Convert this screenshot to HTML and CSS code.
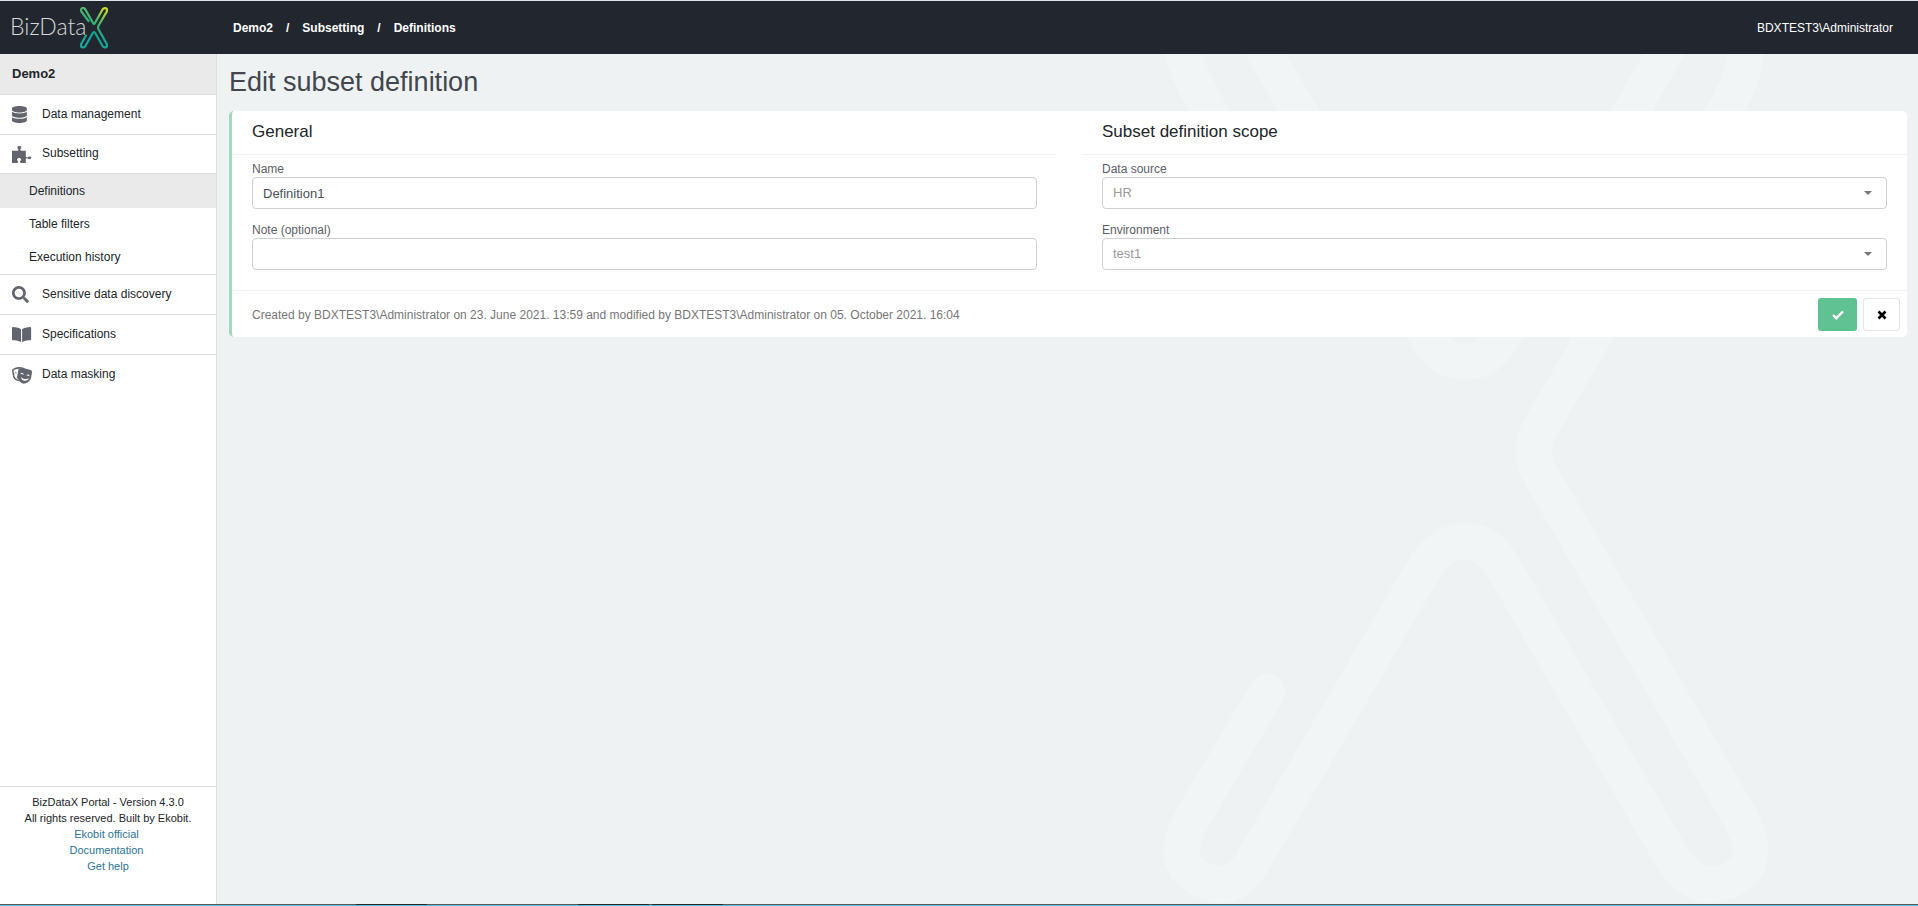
FILE: index.html
```html
<!DOCTYPE html>
<html lang="en">
<head>
<meta charset="utf-8">
<title>BizDataX Portal</title>
<link rel="stylesheet" href="styles.css">
</head>
<body>
<header class="topbar">
  <a class="logo" href="#" aria-label="BizDataX">
    <span class="logo-text">BizData</span>
    <svg class="logo-x" viewBox="0 0 28 42" aria-hidden="true">
      <defs>
        <linearGradient id="lx" x1="0.8" y1="0" x2="0.3" y2="1">
          <stop offset="0" stop-color="#c8d92b"/>
          <stop offset="0.3" stop-color="#4fb96c"/>
          <stop offset="0.65" stop-color="#12a594"/>
          <stop offset="1" stop-color="#16a99a"/>
        </linearGradient>
      </defs>
      <path d="M8.500 14L1.300 4.500Q.4 1.500 2.600 1Q4.300.7 5.400 2.600L13 16Q14 18 15 16L22.500 2.500Q24 .6 26 1.300Q27.700 2.300 26.800 4.500L18.600 18.500Q17.500 20.500 18.600 22.500L26.800 37Q27.700 39.500 25.800 40.300Q23.800 41 22.600 39L15.200 26Q14 24 12.800 26L5.400 39Q4.200 41 2.200 40.300Q.3 39.400 1.200 37L6 28.500" fill="none" stroke="url(#lx)" stroke-width="2.200" stroke-linecap="round"/>
    </svg>
  </a>
  <nav class="crumbs" aria-label="Breadcrumb">
    <a href="#">Demo2</a><span>/</span><a href="#">Subsetting</a><span>/</span><a href="#">Definitions</a>
  </nav>
  <span class="user">BDXTEST3\Administrator</span>
</header>
<div class="shell">
  <aside class="sidebar">
    <a class="project" href="#">Demo2</a>
    <nav class="menu" aria-label="Main">
      <a class="item" href="#"><svg class="ico" viewBox="0 0 448 512" preserveAspectRatio="xMinYMid"><path d="M448 73v46c0 40-100 73-224 73S0 159 0 119V73C0 33 100 0 224 0s224 33 224 73zm0 103v103c0 40-100 73-224 73S0 319 0 279V176c48 33 136 48 224 48s176-15 224-48zm0 160v103c0 40-100 73-224 73S0 479 0 439V336c48 33 136 48 224 48s176-15 224-48z"/></svg>Data management</a>
      <a class="item open" href="#"><svg class="ico" viewBox="0 0 576 512" preserveAspectRatio="xMinYMid"><path d="M519 313c-30 0-36 31-68 31-36 0-35-40-35-40V144H288s-40-1-40-35c0-32 31-38 31-69 0-26-24-40-55-40s-60 15-60 42c0 29 26 43 26 68 0 34-44 34-44 34H0v368h143c37 0 41-18 41-36 0-30-33-34-33-66 0-34 28-50 61-50 34 0 62 15 62 50 0 31-33 37-33 66 0 16 6 36 39 36h136V404s1-36 35-36c32 0 38 31 68 31 38 0 57-13 57-44 0-28-19-42-57-42z"/></svg>Subsetting</a>
      <div class="sub">
        <a class="subitem current" href="#">Definitions</a>
        <a class="subitem" href="#">Table filters</a>
        <a class="subitem" href="#">Execution history</a>
      </div>
      <a class="item" href="#"><svg class="ico" viewBox="0 0 512 512" preserveAspectRatio="xMinYMid"><path d="M505 443L405 343c-4-5-11-7-17-7h-16a208 208 0 1 0-36 36v16c0 6 3 13 7 17l100 100c9 9 24 9 34 0l28-28c9-10 9-25 0-34zM208 336a128 128 0 1 1 0-256 128 128 0 0 1 0 256z"/></svg>Sensitive data discovery</a>
      <a class="item" href="#"><svg class="ico" viewBox="0 0 576 512" preserveAspectRatio="xMinYMid"><path d="M542 32c-55 3-164 15-231 56-5 3-7 8-7 13v364c0 11 12 18 23 13 69-35 169-45 218-47 17-1 31-15 31-31V64c0-18-16-33-34-32zM265 88C198 47 89 35 34 32 16 31 0 46 0 64v336c0 16 14 30 31 31 49 2 149 12 218 47 11 5 23-2 23-13V101c0-5-2-10-7-13z"/></svg>Specifications</a>
      <a class="item last" href="#"><svg class="ico" viewBox="0 0 640 512" preserveAspectRatio="xMinYMid"><path fill-rule="evenodd" d="M207 245c-36 6-61 33-63 65 14-12 34-21 53-24l10-1V245zM147 187c-3-17-22-29-42-25-20 3-34 20-31 37 7-5 16-9 31-12 18-3 30-3 42 0zM206 336l-3-47c-25 4-47 19-62 39 15 9 41 17 66 20zM48 96c33-18 96-46 176-46 70 0 130 19 165 34l53 9c-11-17-21-28-35-36C365 33 300 0 210 3 120 5 58 42 19 68 5 77-1 94 1 111l28 175c11 70 128 151 206 139-10-12-18-22-23-34C165 385 81 315 73 268L48 108zM259 155c-17-10-35-8-42 6 0 20-5 26-5 26-3 15-1 24 3 30z"/><path fill-rule="evenodd" d="M606 120c-36-19-97-48-184-64s-156-7-196-1c-18 4-31 15-34 31l-30 175c-17 96 91 225 170 239s225-71 241-167l31-176c3-15-4-30-18-37zM252 220c5-27 32-44 58-39s44 31 39 58c-7-10-24-19-45-23s-39-3-52 4zm114 196c-57-10-97-60-95-116 28 27 67 50 114 58s90 0 126-16c-20 53-75 84-145 74zm159-133c-9-9-23-18-45-22s-38-1-51 6c5-27 31-45 58-40s43 30 38 56z"/></svg>Data masking</a>
    </nav>
    <footer class="about">
      <span>BizDataX Portal - Version 4.3.0</span>
      <span>All rights reserved. Built by Ekobit.</span>
      <a href="#">Ekobit official&nbsp;</a>
      <a href="#">Documentation&nbsp;</a>
      <a href="#">Get help</a>
    </footer>
  </aside>
  <main class="content">
    <svg class="watermark" viewBox="1140 54 778 850" aria-hidden="true">
      <path d="M1181 40Q1183 65 1206 105L1320 310M1258 40L1428 338Q1442 362 1465 362T1502 338L1672 40M1747 40Q1747 72 1728 105L1542 425Q1526 451 1542 477L1738 814C1770 868 1732 885 1708 885Q1686 882 1670 854L1502 565Q1487 541 1465 541T1426 565L1257 854C1250 868 1239 885 1220 885Q1164 875 1190 822L1267 692"/>
    </svg>
    <h1>Edit subset definition</h1>
    <form class="card">
      <div class="columns">
        <section class="column">
          <h2>General</h2>
          <div class="fields">
            <label for="name">Name</label>
            <input id="name" type="text" value="Definition1">
            <label for="note">Note (optional)</label>
            <input id="note" type="text">
          </div>
        </section>
        <section class="column">
          <h2>Subset definition scope</h2>
          <div class="fields">
            <label for="source">Data source</label>
            <span class="pick"><select id="source" disabled><option>HR</option></select></span>
            <label for="env">Environment</label>
            <span class="pick"><select id="env" disabled><option>test1</option></select></span>
          </div>
        </section>
      </div>
      <div class="actions">
        <p>Created by BDXTEST3\Administrator on 23. June 2021. 13:59 and modified by BDXTEST3\Administrator on 05. October 2021. 16:04</p>
        <button class="save" type="submit" aria-label="Save"><svg viewBox="0 0 12 12"><path d="M1 6L4.300 9.200L11 2.500" fill="none" stroke="#fff" stroke-width="2.400"/></svg></button>
        <button class="cancel" type="button" aria-label="Cancel"><svg viewBox="0 0 12 12"><path d="M2.500 2.500L9.500 9.500M9.500 2.500L2.500 9.500" fill="none" stroke="#000" stroke-width="2.600"/></svg></button>
      </div>
    </form>
  </main>
</div>
<div class="taskbar"><i></i><i class="apart"></i><i></i></div>
</body>
</html>
```

FILE: styles.css
```css
* { box-sizing: border-box; }
body {
  margin: 0;
  min-height: 100vh;
  display: flex;
  flex-direction: column;
  font-family: "Liberation Sans", Arial, sans-serif;
  font-size: 12px;
  color: #212529;
  background: #eef2f3;
}
a { color: inherit; text-decoration: none; }

.topbar {
  display: flex;
  align-items: center;
  height: 54px;
  padding-right: 25px;
  border-top: 1px solid #dfe5e8;
  background: #22272f;
  color: #fff;
}
.logo {
  display: flex;
  align-items: center;
  width: 233px;
  padding-left: 10px;
}
.logo-text {
  padding-bottom: 3px;
  font-family: Lato, sans-serif;
  font-weight: 300;
  font-size: 23px;
  color: #d5d8da;
}
.logo-x { width: 28px; height: 42px; margin-left: -6px; }
.crumbs { display: flex; flex: 1; gap: 13px; font-weight: bold; }

.shell { display: flex; flex: 1; }
.sidebar {
  display: flex;
  flex-direction: column;
  flex: 0 0 217px;
  border-right: 1px solid #dcdfe1;
  background: #fff;
}
.project {
  height: 41px;
  padding: 0 12px;
  line-height: 39px;
  font-size: 13px;
  font-weight: bold;
  background: #eaeaea;
  border-bottom: 1px solid #dcdcdc;
}
.menu { flex: 1; }
.item {
  display: flex;
  align-items: center;
  height: 40px;
  padding: 0 0 2px 12px;
  border-bottom: 1px solid #dcdcdc;
}
.item.open { height: 39px; }
.item.last { border-bottom: 0; }
.ico { width: 22px; height: 17px; margin: 2px 8px 0 0; fill: #62656e; }
.sub { border-bottom: 1px solid #dcdcdc; }
.subitem { display: block; padding-left: 29px; line-height: 33px; }
.current { padding-top: 1px; background: #eaeaea; }
.about {
  display: flex;
  flex-direction: column;
  align-items: center;
  height: 118px;
  padding-top: 7px;
  border-top: 1px solid #dcdcdc;
  font-size: 11px;
  line-height: 16px;
}
.about a { color: #2b7499; }

.content {
  position: relative;
  flex: 1;
  min-width: 0;
  padding: 0 11px 0 12px;
}
.watermark {
  position: absolute;
  top: 0;
  right: 0;
  width: 778px;
  height: 850px;
  fill: none;
  stroke: #f1f5f6;
  stroke-width: 36px;
  stroke-linecap: round;
  stroke-linejoin: round;
}
h1 {
  position: relative;
  margin: 0;
  line-height: 57px;
  font-size: 27px;
  font-weight: normal;
  color: #42464d;
}
.card {
  position: relative;
  border-left: 3px solid #a0d9bc;
  border-radius: 5px;
  background: #fff;
}
.columns { display: flex; gap: 25px; }
.column { flex: 1; min-width: 0; }
h2 {
  margin: 0;
  padding: 0 20px;
  height: 44px;
  line-height: 41px;
  font-size: 17px;
  font-weight: normal;
  border-bottom: 1px solid #f0f1f2;
}
.fields {
  display: flex;
  flex-direction: column;
  padding: 7px 20px 6px;
  color: #5c6066;
}
.fields label { line-height: 15px; }
.fields input, .pick { margin-bottom: 14px; }
.fields input, .fields select {
  width: 100%;
  height: 32px;
  padding: 0 10px;
  border: 1px solid #ced0d6;
  border-radius: 4px;
  background: #fff;
  font: 13px "Liberation Sans", Arial, sans-serif;
  color: #495057;
}
.pick { position: relative; display: block; }
.fields select { appearance: none; padding-bottom: 2px; opacity: 1; color: #9a9a9a; }
.pick::after {
  content: "";
  position: absolute;
  right: 15px;
  top: 14px;
  border: 4px solid transparent;
  border-top-color: #777;
  border-bottom: 0;
}
.actions {
  display: flex;
  align-items: center;
  gap: 6px;
  padding: 7px 7px 6px 20px;
  border-top: 1px solid #f0f1f2;
}
.actions p { flex: 1; margin: 0; color: #777; }
.actions button {
  display: grid;
  place-items: center;
  height: 33px;
  padding: 0;
  border: 0;
  border-radius: 3px;
}
.actions svg { width: 12px; height: 12px; }
.actions .save { width: 39px; background: #60c293; }
.actions .cancel { width: 37px; background: #fff; border: 1px solid #e4e4e4; }
.taskbar {
  display: flex;
  gap: 3px;
  height: 2px;
  padding-left: 356px;
  background: linear-gradient(#555b5e 50%, #5cb8de 50%);
}
.taskbar i { width: 71px; height: 1px; background: #23292c; }
.taskbar .apart { margin-left: 148px; }
```
